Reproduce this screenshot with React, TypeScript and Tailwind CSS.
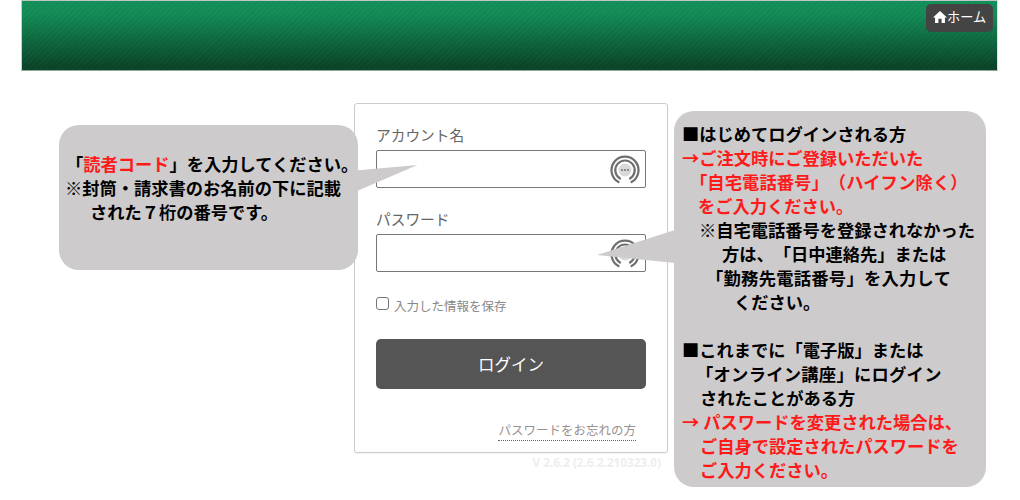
import React from "react";

const FieldIcon = () => (
  <svg width="30" height="30" viewBox="0 0 30 30" className="absolute right-[5px] top-[4px]" fill="none">
    <path d="M8.5 27 A13.5 13.5 0 1 1 21.5 27" stroke="#6f6f6f" strokeWidth="2.2" strokeLinecap="round" />
    <path d="M10 23.5 A9.7 9.7 0 1 1 20 23.5" stroke="#6f6f6f" strokeWidth="2.2" strokeLinecap="round" />
    <circle cx="15" cy="15" r="6.5" fill="#d9d9d9" />
    <circle cx="12" cy="15" r="0.9" fill="#666" />
    <circle cx="15" cy="15" r="0.9" fill="#666" />
    <circle cx="18" cy="15" r="0.9" fill="#666" />
  </svg>
);

const Line = ({ pl, red, children }: { pl: string; red?: boolean; children: React.ReactNode }) => (
  <div className={`h-6 whitespace-pre ${pl} ${red ? "text-[#ff1a1a]" : "text-black"}`}>{children}</div>
);

export default function App() {
  return (
    <div className="relative h-[500px] w-[1020px] overflow-hidden bg-white font-['Noto_Sans_CJK_JP','Noto_Sans',sans-serif] [text-spacing-trim:space-all]">
      <header className="ml-[21px] mr-[22px] flex h-[71px] justify-end border border-t-[#c4c4c4] border-r-[#e0e0e0] border-b-[#8fa89b] border-l-[#c8d0cc] bg-[repeating-linear-gradient(135deg,rgba(255,255,255,0.015)_0px,rgba(255,255,255,0.015)_2px,rgba(0,0,0,0.015)_2px,rgba(0,0,0,0.015)_4px),linear-gradient(to_bottom,#12905a_0%,#128a56_20%,#0a4428_95%)] pt-[3px] pr-[4px]">
        <a className="flex h-[28px] w-[67px] items-center rounded-[5px] bg-[#444444] pb-[2px] pl-[7px] text-[13.2px] text-white">
          <svg width="14" height="14" viewBox="0 0 15 14" fill="#fff">
            <path d="M7.5 0.5 L15 7.5 H12.8 V13.5 H9.2 V9 H5.8 V13.5 H2.2 V7.5 H0 Z" />
          </svg>
          <span>ホーム</span>
        </a>
      </header>

      <main className="ml-[354px] mt-[32px] w-[314px]">
        <div className="h-[350px] w-[314px] rounded-[3px] border border-[#cccccc] bg-white px-[21px] pt-[18px] shadow-[0_1px_1px_rgba(0,0,0,0.05)]">
          <label className="block h-[28px] text-[14.7px] leading-[26px] text-[#666666]">アカウント名</label>
          <div className="relative h-[38px] w-[270px] rounded-[2px] border border-[#777777] bg-white">
            <FieldIcon />
          </div>
          <label className="mt-[17px] block h-[29px] text-[14.7px] leading-[27px] text-[#666666]">パスワード</label>
          <div className="relative h-[38px] w-[270px] rounded-[2px] border border-[#777777] bg-white">
            <FieldIcon />
          </div>
          <div className="mt-[23px] flex h-[20px] items-center gap-[5px]">
            <span className="-mt-[4px] h-[13px] w-[13px] rounded-[3px] border border-[#767676] bg-white" />
            <span className="mt-[2px] text-[12.5px] text-[#888888]">入力した情報を保存</span>
          </div>
          <button className="mt-[24px] flex h-[50px] w-[270px] items-center justify-center rounded-[5px] bg-[#555555] text-[16.5px] text-white">
            ログイン
          </button>
          <div className="mt-[31px] flex justify-end pr-[10px]">
            <a className="border-b border-dotted border-[#666666] text-[12.5px] leading-[20px] text-[#9a8f8f]">パスワードをお忘れの方</a>
          </div>
        </div>
        <div className="mt-[1px] pr-[7px] text-right font-['Open_Sans',sans-serif] text-[11.7px] font-bold text-[#eeeeee]">
          V 2.6.2 (2.6.2.210323.0)
        </div>
      </main>

      <svg className="absolute left-[350px] top-[165px]" width="70" height="30" viewBox="0 0 70 30">
        <polygon points="0,6 67.5,0 0,29" fill="#cdcbcc" />
      </svg>
      <div className="absolute left-[59px] top-[125px] h-[145px] w-[299px] rounded-[20px] bg-[#cdcbcc] pt-[27px] text-[17.25px] font-bold leading-6">
        <Line pl="pl-[7px]">「<span className="text-[#ff1a1a]">読者コード</span>」を入力してください。</Line>
        <Line pl="pl-[6px]">※封筒・請求書のお名前の下に記載</Line>
        <Line pl="pl-[31px]">された７桁の番号です。</Line>
      </div>

      <svg className="absolute left-[596px] top-[230px]" width="80" height="34" viewBox="0 0 80 34">
        <polygon points="1,25 79,0 79,33" fill="#cdcbcc" />
      </svg>
      <div className="absolute left-[674px] top-[111px] h-[376px] w-[312px] rounded-[20px] bg-[#cdcbcc] pt-[11px] text-[17.25px] font-bold leading-6">
        <Line pl="pl-[8px]">■はじめてログインされる方</Line>
        <Line pl="pl-[8px]" red>→ご注文時にご登録いただいた</Line>
        <Line pl="pl-[16px] tracking-[0.1px]" red>「自宅電話番号」（ハイフン除く）</Line>
        <Line pl="pl-[24px]" red>をご入力ください。</Line>
        <Line pl="pl-[25px]">※自宅電話番号を登録されなかった</Line>
        <Line pl="pl-[48px]">方は、「日中連絡先」または</Line>
        <Line pl="pl-[32px] tracking-[0.3px]">「勤務先電話番号」を入力して</Line>
        <Line pl="pl-[60px]">ください。</Line>
        <div className="h-6" />
        <Line pl="pl-[8px]">■これまでに「電子版」または</Line>
        <Line pl="pl-[22px] tracking-[0.3px]">「オンライン講座」にログイン</Line>
        <Line pl="pl-[26px]">されたことがある方</Line>
        <Line pl="pl-[8px]" red>→ パスワードを変更された場合は、</Line>
        <Line pl="pl-[26px]" red>ご自身で設定されたパスワードを</Line>
        <Line pl="pl-[26px]" red>ご入力ください。</Line>
      </div>
    </div>
  );
}
